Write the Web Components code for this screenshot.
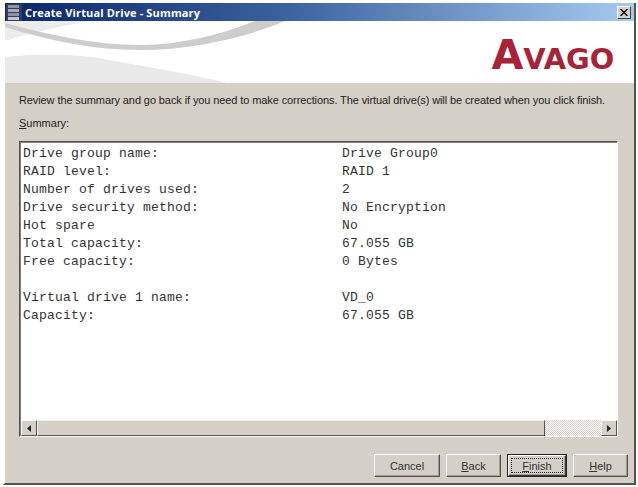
<!DOCTYPE html>
<html>
<head>
<meta charset="utf-8">
<title>Create Virtual Drive - Summary</title>
<style>
  html, body { margin: 0; height: 100%; background: #fff; overflow: hidden; }
  body { font: 11px "Liberation Sans", sans-serif; color: #222; }
</style>
</head>
<body>
<wizard-window>
  <title-bar slot="title">Create Virtual Drive - Summary</title-bar>
  <brand-header slot="header"></brand-header>
  <p>Review the summary and go back if you need to make corrections. The virtual drive(s) will be created when you click finish.</p>
  <label><u>S</u>ummary:</label>
  <summary-box>
    <summary-row name="Drive group name:" value="Drive Group0"></summary-row>
    <summary-row name="RAID level:" value="RAID 1"></summary-row>
    <summary-row name="Number of drives used:" value="2"></summary-row>
    <summary-row name="Drive security method:" value="No Encryption"></summary-row>
    <summary-row name="Hot spare" value="No"></summary-row>
    <summary-row name="Total capacity:" value="67.055 GB"></summary-row>
    <summary-row name="Free capacity:" value="0 Bytes"></summary-row>
    <summary-row></summary-row>
    <summary-row name="Virtual drive 1 name:" value="VD_0"></summary-row>
    <summary-row name="Capacity:" value="67.055 GB"></summary-row>
  </summary-box>
  <win-button slot="buttons" style="width:66px">Cancel</win-button>
  <win-button slot="buttons" style="width:55px"><u>B</u>ack</win-button>
  <win-button slot="buttons" style="width:60px" focused><u>F</u>inish</win-button>
  <win-button slot="buttons" style="width:55px"><u>H</u>elp</win-button>
</wizard-window>

<script>
  class WizardWindow extends HTMLElement {
    constructor() {
      super()
      this.attachShadow({ mode: 'open' })
      this.shadowRoot.innerHTML = `
      <style>
        :host {
          display: flex; flex-direction: column; box-sizing: border-box;
          margin: 3px 2px 0 3px; height: 482px;
          background: #d4d0c8;
          border-left: 2px solid #fff;
          border-right: 2px solid #55534e;
          border-bottom: 2px solid #55534e;
        }
        .body { flex: 1; display: flex; flex-direction: column; padding: 0 16px 0 14px; min-height: 0; }
        ::slotted(p) { margin: 10px 0 0; line-height: 15px; white-space: nowrap; letter-spacing: -0.1px; }
        ::slotted(label) { display: block; margin-top: 8px; line-height: 15px; }
        .buttons { display: flex; justify-content: flex-end; gap: 6px; padding: 17px 6px 6px 0; }
      </style>
      <slot name="title"></slot>
      <slot name="header"></slot>
      <div class="body"><slot></slot></div>
      <div class="buttons"><slot name="buttons"></slot></div>
      `
    }
  }

  class TitleBar extends HTMLElement {
    constructor() {
      super()
      this.attachShadow({ mode: 'open' })
      this.shadowRoot.innerHTML = `
      <style>
        :host {
          display: flex; align-items: center; height: 18px; flex: none;
          background: linear-gradient(90deg, #0a246a 0%, #3d629f 45%, #a6caf0 100%);
          color: #fff; font: bold 11px "Open Sans", sans-serif; letter-spacing: 0.14px;
        }
        svg { margin: 0 3px 0 1px; flex: none; }
        .text { flex: 1; }
        .close {
          width: 14px; height: 13px; margin-right: 3px; box-sizing: border-box;
          background: #d4d0c8; display: flex; align-items: center; justify-content: center;
          border: 1px solid; border-color: #fff #404040 #404040 #fff;
        }
      </style>
      <svg width="16" height="17" viewBox="0 0 16 17">
        <rect width="16" height="17" fill="#2f3f63"/>
        <rect x="2" y="1" width="11" height="3" fill="#8f939b"/>
        <rect x="2" y="5" width="11" height="3" fill="#a7aab0"/>
        <rect x="2" y="9" width="11" height="3" fill="#8f939b"/>
        <rect x="2" y="13" width="11" height="3" fill="#c4c6ca"/>
      </svg>
      <span class="text"><slot></slot></span>
      <span class="close">
        <svg style="margin:0" width="8" height="7" viewBox="0 0 8 7"><path d="M0.5 0 L7.5 7 M7.5 0 L0.5 7" stroke="#111" stroke-width="1.5"/></svg>
      </span>
      `
    }
  }

  class BrandHeader extends HTMLElement {
    constructor() {
      super()
      this.attachShadow({ mode: 'open' })
      this.shadowRoot.innerHTML = `
      <style>
        :host { display: flex; justify-content: flex-end; height: 62px; flex: none; position: relative; background: #fff; overflow: hidden; }
        svg { position: absolute; left: 0; top: 0; }
        .logo {
          position: relative; margin: 12px 20px 0 0; height: 44px;
          font: bold 40px/44px "DejaVu Sans", sans-serif; font-variant: small-caps;
          color: #a92338; transform: scaleX(1.03); transform-origin: right;
        }
      </style>
      <svg width="320" height="62" viewBox="0 0 320 62">
        <path d="M0 0 H85 C60 4 25 12 3 19 L0 19 Z" fill="#ececec"/>
        <path d="M0 6 C45 20 90 29 135 29 C190 29 245 15 280 0 L250 0 C215 14 175 24 135 24 C90 24 45 14 0 2 Z" fill="#cdcdcb"/>
        <path d="M0 36 C30 33 75 32 110 40 C150 47 190 54 222 62 L0 62 Z" fill="#e9e9e9"/>
      </svg>
      <span class="logo">Avago</span>
      `
    }
  }

  class SummaryBox extends HTMLElement {
    constructor() {
      super()
      this.attachShadow({ mode: 'open' })
      this.shadowRoot.innerHTML = `
      <style>
        :host {
          display: flex; flex-direction: column; box-sizing: border-box;
          margin-top: 10px; flex: 1; min-height: 0;
          background: #fff;
          border: 1px solid; border-color: #55534e #fff #fff #55534e;
          box-shadow: inset 1px 1px 0 #807d76;
        }
        .rows { flex: 1; padding: 3px 0 0 3px; min-height: 0; }
      </style>
      <div class="rows"><slot></slot></div>
      <h-scrollbar></h-scrollbar>
      `
    }
  }

  class SummaryRow extends HTMLElement {
    constructor() {
      super()
      this.attachShadow({ mode: 'open' })
      this.shadowRoot.innerHTML = `
      <style>
        :host {
          display: grid; grid-template-columns: 319px 1fr; height: 18px;
          font: 13px/18px "Liberation Mono", monospace; letter-spacing: 0.2px; color: #333;
          white-space: pre;
        }
      </style>
      <span></span><span></span>
      `
    }
    connectedCallback() {
      const spans = this.shadowRoot.querySelectorAll("span")
      spans[0].textContent = this.getAttribute("name") || ""
      spans[1].textContent = this.getAttribute("value") || ""
    }
  }

  class HScrollbar extends HTMLElement {
    constructor() {
      super()
      this.attachShadow({ mode: 'open' })
      this.shadowRoot.innerHTML = `
      <style>
        :host { display: flex; height: 16px; flex: none; margin-left: 1px;
          background: repeating-conic-gradient(#d4d0c8 0 25%, #fff 0 50%) 0 0 / 2px 2px; }
        .btn {
          width: 16px; box-sizing: border-box; background: #d4d0c8; flex: none;
          display: flex; align-items: center; justify-content: center;
          border: 1px solid; border-color: #fff #55534e #55534e #fff;
        }
        .thumb {
          width: 508px; box-sizing: border-box; background: #d4d0c8; flex: none;
          border: 1px solid; border-color: #efefec #55534e #55534e #efefec;
        }
        .track { flex: 1; }
      </style>
      <span class="btn"><svg width="4" height="7" viewBox="0 0 4 7"><path d="M4 0 V7 L0 3.5 Z" fill="#222"/></svg></span>
      <span class="thumb"></span>
      <span class="track"></span>
      <span class="btn"><svg width="4" height="7" viewBox="0 0 4 7"><path d="M0 0 V7 L4 3.5 Z" fill="#222"/></svg></span>
      `
    }
  }

  class WinButton extends HTMLElement {
    constructor() {
      super()
      this.attachShadow({ mode: 'open' })
      this.shadowRoot.innerHTML = `
      <style>
        :host {
          display: flex; box-sizing: border-box; height: 23px; flex: none;
          background: #d4d0c8; color: #333; font-size: 11px;
          border: 1px solid; border-color: #fff #55534e #55534e #fff;
          box-shadow: inset -1px -1px 0 #a09d96;
        }
        :host([focused]) {
          outline: 1px solid #222; outline-offset: -1px;
          border-width: 2px; border-color: #fff #3c3a36 #3c3a36 #fff;
        }
        .face { flex: 1; display: flex; align-items: center; justify-content: center; margin: 2px; }
        :host([focused]) .face { outline: 1px dotted #222; outline-offset: -1px; }
      </style>
      <div class="face"><slot></slot></div>
      `
    }
  }

  customElements.define("wizard-window", WizardWindow)
  customElements.define("title-bar", TitleBar)
  customElements.define("brand-header", BrandHeader)
  customElements.define("summary-box", SummaryBox)
  customElements.define("summary-row", SummaryRow)
  customElements.define("h-scrollbar", HScrollbar)
  customElements.define("win-button", WinButton)
</script>
</body>
</html>
